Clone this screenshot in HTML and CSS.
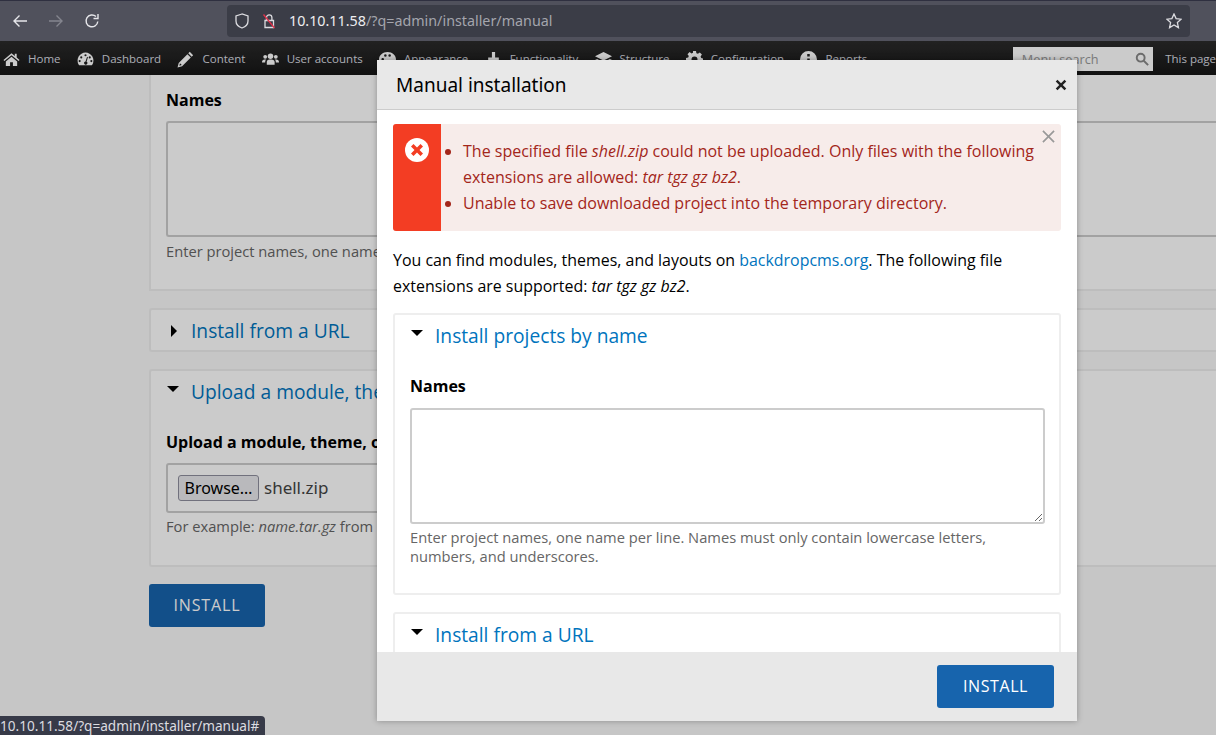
FILE: index.html
```html
<!DOCTYPE html>
<html lang="en">
<head>
    <meta charset="UTF-8">
    <meta name="viewport" content="width=device-width, initial-scale=1.0">
    <title>Manual installation</title>
    <link rel="stylesheet" href="styles.css">
</head>
<body>
    <!-- Browser toolbar -->
    <div class="browser-bar">
        <svg class="nav-icon" viewBox="0 0 16 16"><path d="M15 8H2M7.5 2.5 2 8l5.500 5.500"/></svg>
        <svg class="nav-icon nav-off" viewBox="0 0 16 16"><path d="M1 8h13M8.500 2.500 14 8l-5.500 5.500"/></svg>
        <svg class="nav-icon" viewBox="0 0 16 16"><path d="M13.800 8.500A5.900 5.900 0 1 1 12 3.600M14 1v4.500H9.500"/></svg>
        <div class="url-bar">
            <svg class="url-icon" viewBox="0 0 16 16"><path d="M8 1 2 3v5c0 3.500 2.500 5.800 6 7 3.500-1.200 6-3.500 6-7V3z"/></svg>
            <svg class="url-icon lock-icon" viewBox="0 0 16 16">
                <path d="M4 7.500h8.500v7H4zM5.500 7.500V4.500a2.700 2.700 0 0 1 5.400 0v3"/>
                <path class="lock-strike" d="M2.500 1.500 13.500 15"/>
            </svg>
            <span class="url-text"><span class="url-host">10.10.11.58</span>/?q=admin/installer/manual</span>
            <svg class="url-icon star-icon" viewBox="0 0 16 16"><path d="m8 1 2.100 4.600 5 .6-3.700 3.400 1 5L8 12l-4.400 2.600 1-5L.9 6.200l5-.6z"/></svg>
        </div>
    </div>

    <!-- Admin menu -->
    <div class="admin-bar">
        <a class="admin-item"><svg class="admin-icon" viewBox="0 0 18 16"><path d="M9 1.500.5 8.500l1 1.200L9 3.600l7.500 6.100 1-1.200-3-2.500V2h-2v2.300zM9 5 3 10v5h4.500v-4h3v4H15v-5z"/></svg>Home</a>
        <a class="admin-item"><svg class="admin-icon" viewBox="0 0 16 16"><path fill-rule="evenodd" d="M8 1.500a7.500 7.500 0 0 0-6.500 11.200c.3.500.8.800 1.300.800h10.400c.5 0 1-.3 1.300-.8A7.500 7.500 0 0 0 8 1.500zM8 3a1 1 0 1 1 0 2 1 1 0 0 1 0-2zM4 5a1 1 0 1 1 0 2 1 1 0 0 1 0-2zm8 0a1 1 0 1 1 0 2 1 1 0 0 1 0-2zM2.500 8.500a1 1 0 1 1 0 2 1 1 0 0 1 0-2zm11 0a1 1 0 1 1 0 2 1 1 0 0 1 0-2zM9.500 5.500l.8.300L9 10a1.500 1.500 0 1 1-1-.2z"/></svg>Dashboard</a>
        <a class="admin-item"><svg class="admin-icon" viewBox="0 0 16 16"><path fill-rule="evenodd" d="M12 .8 15.200 4l-1.400 1.400-3.200-3.200zM9.800 3l3.200 3.200-8.200 8.200L.5 15.500l1.100-4.300zM2.800 11.500l-.6 2.300 2.300-.6z"/></svg>Content</a>
        <a class="admin-item"><svg class="admin-icon" viewBox="0 0 16 16"><circle cx="8" cy="5" r="2.600"/><circle cx="3" cy="5.500" r="1.800"/><circle cx="13" cy="5.500" r="1.800"/><path d="M4.500 13v-2.500C4.500 9 5.500 8 7 8h2c1.500 0 3 1 2.900 2.500V13zM0 10.500C0 9 1 8 2.500 8H4c-.8.600-1 1.500-1 2.800H0zM16 10.500C16 9 15 8 13.500 8H12c.8.600 1 1.500 1 2.800h3z"/></svg>User accounts</a>
        <a class="admin-item"><svg class="admin-icon" viewBox="0 0 16 16"><path fill-rule="evenodd" d="M8 1C3.500 1 0 4 0 8s3.500 7 7.500 7c1.500 0 1.800-1 1.300-2-.5-1.200.2-2 1.500-2H13c2 0 3-1.300 3-3 0-4-3.500-7-8-7zM3.500 6.500a1.200 1.200 0 1 1 0 2.400 1.200 1.200 0 0 1 0-2.400zM6 3a1.200 1.200 0 1 1 0 2.400A1.200 1.200 0 0 1 6 3zm4 0a1.200 1.200 0 1 1 0 2.400A1.200 1.200 0 0 1 10 3z"/></svg>Appearance</a>
        <a class="admin-item"><svg class="admin-icon" viewBox="0 0 16 16"><path d="M6.500 1h3v5h3.500v3H3V6h3.500zM6 10h4v5H6z"/></svg>Functionality</a>
        <a class="admin-item"><svg class="admin-icon" viewBox="0 0 16 16"><path d="M8 1 0 5l8 4 8-4zM2 7.500 0 8.500l8 4 8-4-2-1-6 3zM2 11l-2 1 8 4 8-4-2-1-6 3z"/></svg>Structure</a>
        <a class="admin-item"><svg class="admin-icon" viewBox="0 0 17 17"><path fill-rule="evenodd" d="M7 0h3l.4 2.200 1.500.6 1.900-1.300 2.100 2.100-1.300 1.900.6 1.500L17 7.400v3l-2.200.4-.6 1.500 1.300 1.900-2.100 2.100-1.900-1.300-1.500.6L10 17H7l-.4-2.300-1.500-.6-1.900 1.300-2.100-2.100 1.300-1.900-.6-1.500L0 10V7l2.200-.4.600-1.500-1.300-1.900 2.100-2.100 1.900 1.300 1.500-.6zM8.500 5.500a3 3 0 1 0 0 6 3 3 0 0 0 0-6z"/></svg>Configuration</a>
        <a class="admin-item"><svg class="admin-icon" viewBox="0 0 16 16"><path fill-rule="evenodd" d="M8 0a8 8 0 1 0 0 16A8 8 0 0 0 8 0zM6.800 2.800h2.400v2.400H6.800zM6.800 7h2.400v6.200H6.800z"/></svg>Reports</a>
        <div class="admin-search">
            <span>Menu search</span>
            <svg class="search-icon" viewBox="0 0 16 16"><circle cx="6.500" cy="6.500" r="4.500"/><path d="m10 10 5 5"/></svg>
        </div>
        <span class="admin-page">This page</span>
    </div>

    <!-- Installer page behind the dialog -->
    <div class="page">
        <div class="fieldset fieldset-top">
            <div class="field-label">Names</div>
            <textarea class="names-input"></textarea>
            <div class="help">Enter project names, one name</div>
        </div>
        <div class="fieldset fieldset-closed">
            <div class="legend"><span class="arrow-right"></span><a>Install from a URL</a></div>
        </div>
        <div class="fieldset fieldset-upload">
            <div class="legend"><span class="arrow-down"></span><a>Upload a module, the</a></div>
            <div class="field-label">Upload a module, theme, o</div>
            <div class="file-box"><span class="file-button">Browse…</span>shell.zip</div>
            <div class="help">For example: <em>name.tar.gz</em> from</div>
        </div>
        <a class="button button-page">Install</a>
    </div>

    <div class="overlay"></div>

    <!-- Dialog -->
    <div class="dialog">
        <div class="dialog-header">
            <span class="dialog-title">Manual installation</span>
            <svg class="dialog-close" viewBox="0 0 12 12"><path d="M3 1.500 6 4.500l3-3L10.500 3l-3 3 3 3L9 10.500l-3-3-3 3L1.500 9l3-3-3-3z"/></svg>
        </div>
        <div class="dialog-body">
            <div class="message">
                <div class="message-side">
                    <svg class="message-icon" viewBox="0 0 24 24">
                        <circle cx="12" cy="12" r="12" fill="#fff"/>
                        <path d="M8.500 6 12 9.500 15.500 6 18 8.500 14.500 12l3.500 3.500-2.500 2.500-3.500-3.500L8.500 18 6 15.500 9.500 12 6 8.500z" fill="#f33d23"/>
                    </svg>
                </div>
                <ul class="message-list">
                    <li>The specified file <em>shell.zip</em> could not be uploaded. Only files with the following extensions are allowed: <em>tar tgz gz bz2</em>.</li>
                    <li>Unable to save downloaded project into the temporary directory.</li>
                </ul>
                <svg class="message-close" viewBox="0 0 14 14"><path d="m1 1 12 12M13 1 1 13"/></svg>
            </div>
            <p class="intro">You can find modules, themes, and layouts on <a>backdropcms.org</a>. The following file extensions are supported: <em>tar tgz gz bz2</em>.</p>
            <div class="fieldset">
                <div class="legend"><span class="arrow-down"></span><a>Install projects by name</a></div>
                <div class="field-label">Names</div>
                <textarea class="names-input"></textarea>
                <div class="help">Enter project names, one name per line. Names must only contain lowercase letters, numbers, and underscores.</div>
            </div>
            <div class="fieldset">
                <div class="legend"><span class="arrow-down"></span><a>Install from a URL</a></div>
            </div>
        </div>
        <div class="dialog-footer">
            <a class="button">Install</a>
        </div>
    </div>

    <div class="status-link">10.10.11.58/?q=admin/installer/manual#</div>
</body>
</html>
```

FILE: styles.css
```css
/* Base */
html, body {
    margin: 0;
    padding: 0;
    height: 100%;
    overflow: hidden;
}

body {
    position: relative;
    background: #f9f9f9;
    color: #000;
    font-family: 'Open Sans', 'Noto Sans', sans-serif;
    font-size: 16px;
    line-height: 26px;
}

a {
    color: #0074bd;
}

/* Browser toolbar */
.browser-bar {
    height: 40px;
    display: flex;
    align-items: center;
    border-top: 1px solid #2f3040;
    background: #50515c;
}

.nav-icon {
    width: 16px;
    height: 16px;
    flex: none;
    margin-left: 12px;
    margin-right: 8px;
    fill: none;
    stroke: #e6e6ea;
    stroke-width: 1.4;
}

.nav-off {
    stroke: #84858e;
}

.url-bar {
    width: 963px;
    height: 32px;
    margin-left: 119px;
    flex: none;
    display: flex;
    align-items: center;
    gap: 11px;
    padding-left: 7px;
    box-sizing: border-box;
    border-radius: 4px;
    background: #3b3d47;
}

.url-icon {
    width: 16px;
    height: 16px;
    flex: none;
    fill: none;
    stroke: #dcdce0;
    stroke-width: 1.3;
}

.lock-strike {
    stroke: #e2304a;
}

.star-icon {
    margin-left: auto;
    margin-right: 8px;
}

.url-text {
    margin-left: 1px;
    font-family: 'Noto Sans', sans-serif;
    font-size: 14.3px;
    color: #a4a5ad;
}

.url-host {
    color: #eeeef0;
}

/* Admin menu */
.admin-bar {
    height: 34px;
    padding: 2px 0 0 3px;
    box-sizing: border-box;
    display: flex;
    align-items: center;
    gap: 16.3px;
    background: linear-gradient(#2b2b2b, #161616);
    font-size: 11.5px;
    white-space: nowrap;
    overflow: hidden;
}

.admin-item {
    display: flex;
    align-items: center;
    gap: 8px;
    color: #d8dbe0;
}

.admin-icon {
    width: 17px;
    height: 17px;
    flex: none;
    fill: #fff;
}

.admin-search {
    width: 140px;
    height: 24px;
    margin-left: 129.3px;
    padding: 0 4px 0 9px;
    box-sizing: border-box;
    display: flex;
    align-items: center;
    justify-content: space-between;
    background: #fff;
    color: #999;
    font-size: 12.7px;
}

.search-icon {
    width: 14px;
    height: 14px;
    fill: none;
    stroke: #888;
    stroke-width: 2.2;
}

.admin-page {
    margin-left: -4px;
    color: #d8dbe0;
    font-size: 11.5px;
}

/* Page behind the dialog */
.page {
    padding-left: 149px;
}

.fieldset {
    padding: 0 14px 27px 15px;
    margin-bottom: 17px;
    box-sizing: border-box;
    border: 2px solid #eee;
    border-radius: 3px;
    background: #fff;
}

/* These run off the right side of the window */
.page .fieldset {
    padding-right: 0;
    padding-bottom: 0;
    border-right: 0;
    border-radius: 3px 0 0 3px;
}

.page .fieldset-top {
    height: 216px;
    padding-top: 12px;
    border-top: 0;
    border-radius: 0;
}

.page .names-input {
    border-right: 0;
    border-radius: 3px 0 0 3px;
    resize: none;
}

.fieldset-closed {
    height: 44px;
}

.fieldset-upload {
    height: 198px;
}

.legend {
    margin-top: 8px;
    display: flex;
    align-items: center;
    height: 26px;
    gap: 12px;
    font-size: 19.2px;
    white-space: nowrap;
}

.arrow-down {
    width: 0;
    height: 0;
    margin: -6px 0 0 1px;
    border-left: 6px solid transparent;
    border-right: 6px solid transparent;
    border-top: 6px solid #000;
}

.arrow-right {
    width: 0;
    height: 0;
    margin: 0 2px 0 5px;
    border-top: 6px solid transparent;
    border-bottom: 6px solid transparent;
    border-left: 6px solid #000;
}

.field-label {
    font-weight: 700;
    line-height: 26px;
    white-space: nowrap;
}

.legend + .field-label {
    margin-top: 24px;
}

.names-input {
    display: block;
    width: 100%;
    height: 116px;
    margin-top: 8px;
    padding: 0;
    box-sizing: border-box;
    border: 2px solid #ccc;
    border-radius: 3px;
    background: #fff;
}

.help {
    max-width: 600px;
    margin-top: 5px;
    color: #666;
    font-size: 14.7px;
    line-height: 19px;
}

.page .help {
    white-space: nowrap;
}

.dialog .names-input {
    margin-top: 9px;
}

.dialog .help {
    margin-top: 4px;
}

.fieldset-upload .help {
    margin-top: 4px;
}

.file-box {
    width: 300px;
    height: 50px;
    margin-top: 8px;
    padding-left: 10px;
    display: flex;
    align-items: center;
    gap: 5px;
    box-sizing: border-box;
    border: 2px solid #ccc;
    border-radius: 3px;
    color: #444;
    font-family: 'Noto Sans', sans-serif;
    font-size: 17px;
}

.file-button {
    height: 26px;
    width: 81px;
    box-sizing: border-box;
    text-align: center;
    line-height: 24px;
    border: 1px solid #8f8f9d;
    border-radius: 3px;
    background: #e9e9ed;
    color: #000;
    font-size: 16px;
}

.button {
    display: inline-block;
    height: 43px;
    width: 117px;
    box-sizing: border-box;
    text-align: center;
    line-height: 43px;
    border-radius: 3px;
    background: #1764ad;
    color: #fff;
    letter-spacing: .6px;
    text-transform: uppercase;
}

.button-page {
    width: 116px;
    letter-spacing: .9px;
}

/* Dimmed layer */
.overlay {
    position: absolute;
    top: 41px;
    right: 0;
    bottom: 0;
    left: 0;
    background: rgba(0, 0, 0, 0.205);
}

/* Dialog */
.dialog {
    position: absolute;
    top: 60px;
    left: 377px;
    width: 700px;
    height: 661px;
    display: flex;
    flex-direction: column;
    background: #fff;
    box-shadow: 0 0 6px rgba(0, 0, 0, 0.3);
}

.dialog-header {
    height: 50px;
    flex: none;
    display: flex;
    align-items: center;
    justify-content: space-between;
    padding: 0 9px 0 19px;
    box-sizing: border-box;
    border-bottom: 1px solid #ccc;
    background: #e8e8e8;
}

.dialog-title {
    font-family: 'Noto Sans', sans-serif;
    font-size: 19px;
}

.dialog-close {
    width: 14px;
    height: 14px;
    fill: #222;
}

.dialog-body {
    flex: 1;
    min-height: 0;
    overflow: hidden;
    padding: 14px 16px 0;
}

.dialog-footer {
    height: 69px;
    flex: none;
    display: flex;
    justify-content: flex-end;
    padding: 13px 23px 0 0;
    box-sizing: border-box;
    background: #e8e8e8;
}

/* Error message */
.message {
    position: relative;
    height: 107px;
    width: 668px;
    display: flex;
    border-radius: 3px;
    overflow: hidden;
    background: #f7ecea;
    color: #a3261a;
}

.message-side {
    width: 48px;
    flex: none;
    background: #f33d23;
}

.message-icon {
    display: block;
    width: 24px;
    height: 24px;
    margin: 14px 0 0 12px;
}

.message-list {
    margin: 14px 0 0;
    padding: 0 22px;
}

.message-close {
    position: absolute;
    top: 6px;
    right: 6px;
    width: 13px;
    height: 13px;
    fill: none;
    stroke: #999;
    stroke-width: 1.8;
}

.intro {
    margin: 16px 0 14px;
    font-size: 15.95px;
}

/* Status link tooltip */
.status-link {
    position: absolute;
    left: 0;
    bottom: 0;
    height: 19px;
    width: 265px;
    border-top-right-radius: 4px;
    background: #373a48;
    color: #dcdce0;
    font-family: 'Noto Sans', sans-serif;
    font-size: 13.6px;
    line-height: 19px;
    white-space: nowrap;
}
```
